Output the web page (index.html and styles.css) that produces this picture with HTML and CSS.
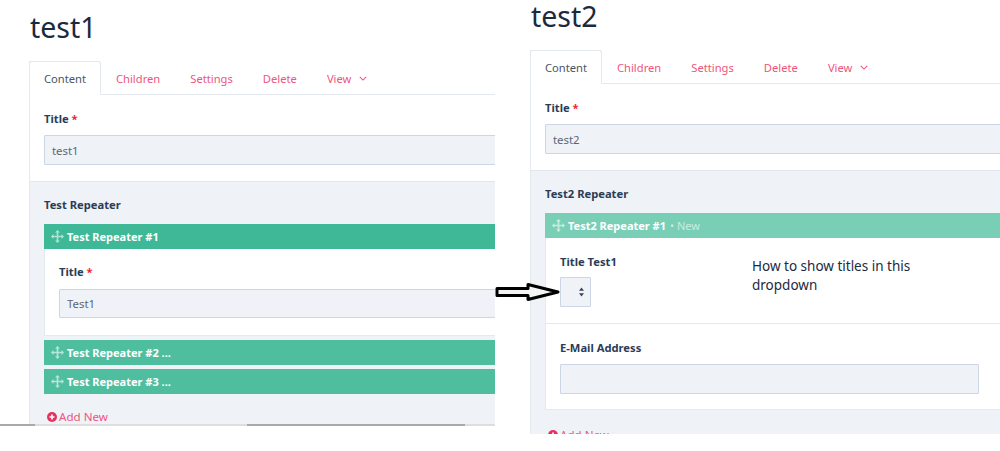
FILE: index.html
```html
<!DOCTYPE html>
<html lang="en">
<head>
<meta charset="utf-8">
<title>Repeater titles</title>
<link rel="stylesheet" href="styles.css">
</head>
<body>
<main class="stage">
  <section class="panel panel-left">
    <h1 class="page-title">test1</h1>
    <div class="card">
      <nav class="tabs">
        <a class="tab tab-active">Content</a>
        <a class="tab">Children</a>
        <a class="tab">Settings</a>
        <a class="tab">Delete</a>
        <a class="tab">View <svg class="caret" viewBox="0 0 10 6"><path d="M1 1l4 4 4-4"/></svg></a>
      </nav>
      <div class="form-top">
        <label class="label">Title <span class="req">*</span></label>
        <input class="input" value="test1" readonly>
      </div>
      <div class="form-gray">
        <div class="label group-label">Test Repeater</div>
        <div class="bar bar-open">
          <svg class="move" viewBox="0 0 16 16"><path d="M8 0l3 3H9v4h4V5l3 3-3 3V9H9v4h2l-3 3-3-3h2V9H3v2L0 8l3-3v2h4V3H5z"/></svg>
          <span>Test Repeater #1</span>
        </div>
        <div class="bar-body body-left">
          <label class="label">Title <span class="req">*</span></label>
          <input class="input" value="Test1" readonly>
        </div>
        <div class="bar bar-closed">
          <svg class="move" viewBox="0 0 16 16"><path d="M8 0l3 3H9v4h4V5l3 3-3 3V9H9v4h2l-3 3-3-3h2V9H3v2L0 8l3-3v2h4V3H5z"/></svg>
          <span>Test Repeater #2 ...</span>
        </div>
        <div class="bar bar-closed">
          <svg class="move" viewBox="0 0 16 16"><path d="M8 0l3 3H9v4h4V5l3 3-3 3V9H9v4h2l-3 3-3-3h2V9H3v2L0 8l3-3v2h4V3H5z"/></svg>
          <span>Test Repeater #3 ...</span>
        </div>
        <a class="add-new">
          <svg class="plus" viewBox="0 0 12 12"><circle cx="6" cy="6" r="6"/><path d="M6 3v6M3 6h6"/></svg>Add New
        </a>
      </div>
    </div>
    <div class="edge">
      <span class="edge-dark edge-a"></span>
      <span class="edge-light edge-b"></span>
      <span class="edge-dark edge-c"></span>
      <span class="edge-light edge-d"></span>
    </div>
  </section>

  <section class="panel panel-right">
    <h1 class="page-title">test2</h1>
    <div class="card">
      <nav class="tabs">
        <a class="tab tab-active">Content</a>
        <a class="tab">Children</a>
        <a class="tab">Settings</a>
        <a class="tab">Delete</a>
        <a class="tab">View <svg class="caret" viewBox="0 0 10 6"><path d="M1 1l4 4 4-4"/></svg></a>
      </nav>
      <div class="form-top">
        <label class="label">Title <span class="req">*</span></label>
        <input class="input" value="test2" readonly>
      </div>
      <div class="form-gray">
        <div class="label group-label">Test2 Repeater</div>
        <div class="bar bar-new">
          <svg class="move" viewBox="0 0 16 16"><path d="M8 0l3 3H9v4h4V5l3 3-3 3V9H9v4h2l-3 3-3-3h2V9H3v2L0 8l3-3v2h4V3H5z"/></svg>
          <span>Test2 Repeater #1</span><span class="new-tag">• New</span>
        </div>
        <div class="bar-body body-right">
          <div class="field-select">
            <label class="label">Title Test1</label>
            <div class="select">
              <svg class="sort" viewBox="0 0 6 11"><path d="M3 0l3 4H0zM3 11L0 7h6z"/></svg>
            </div>
          </div>
          <div class="field-mail">
            <label class="label">E-Mail Address</label>
            <input class="input input-mail" readonly>
          </div>
        </div>
        <a class="add-new">
          <svg class="plus" viewBox="0 0 12 12"><circle cx="6" cy="6" r="6"/><path d="M6 3v6M3 6h6"/></svg>Add New
        </a>
      </div>
    </div>
  </section>

  <svg class="arrow" viewBox="0 0 66 20"><path d="M2 6.500h31V2.500L63 10 33 17.500V13.500H2z"/></svg>
  <p class="note">How to show titles in this dropdown</p>
</main>
</body>
</html>
```
FILE: styles.css
```css
* { box-sizing: border-box; }
html, body { margin: 0; padding: 0; background: #fff; }
body { font-family: "Noto Sans", "Open Sans", sans-serif; color: #22304a; }

.stage {
  position: relative;
  display: flex;
  align-items: flex-start;
  width: 1000px;
  height: 451px;
  overflow: hidden;
}

.panel { position: relative; overflow: hidden; flex: none; }
.panel-left { width: 495px; height: 426px; padding: 0 0 0 29px; }
.panel-right { width: 505px; height: 434px; padding: 0 0 0 35px; }

.page-title {
  margin: 0;
  font-size: 28.500px;
  font-weight: 400;
  color: #1c2a3f;
}
.panel-left .page-title { height: 61px; padding: 7px 0 0 1px; line-height: 40px; }
.panel-right .page-title { height: 50px; padding: 0 0 0 1px; line-height: 33px; }

.card {
  width: 620px;
  border-left: 1px solid #e4e8ef;
  font-size: 11.200px;
}

.tabs {
  display: flex;
  height: 34px;
  border-bottom: 1px solid #e4e8ef;
}
.tab {
  display: flex;
  align-items: center;
  gap: 7px;
  height: 34px;
  padding: 0 15px;
  color: #f0557c;
  white-space: nowrap;
}
.tab-active {
  width: 72px;
  margin-left: -1px;
  padding: 0 14px;
  color: #4b5563;
  background: #fff;
  border: 1px solid #e4e8ef;
  border-bottom-color: #fff;
  border-radius: 3px 3px 0 0;
}
.caret { width: 8px; height: 5px; margin-left: 1px; }
.caret path { fill: none; stroke: #f0557c; stroke-width: 1.300; }

.form-top {
  height: 86px;
  padding: 15px 14px 0;
  background: #fff;
}
.label {
  display: block;
  height: 18px;
  font-size: 11.200px;
  font-weight: 700;
  line-height: 18px;
  color: #2b3c55;
}
.req { color: #f01f2f; }

.input {
  display: block;
  width: 100%;
  height: 30px;
  margin-top: 7px;
  padding: 0 7px;
  font: 11.400px "Noto Sans", sans-serif;
  color: #5b6675;
  background: #eff2f7;
  border: 1px solid #ccd6e4;
  border-radius: 1px;
  outline: none;
}

.form-gray {
  height: 270px;
  padding: 14px 0 0 14px;
  background: #eff2f7;
  border-top: 1px solid #e2e6ee;
}
.group-label { margin-bottom: 10px; }

.bar {
  display: flex;
  align-items: center;
  height: 25px;
  padding-left: 7px;
  font-size: 11px;
  font-weight: 700;
  color: #fff;
}
.bar-open { background: #3eb897; }
.bar-closed { background: #4fbe9f; margin-top: 4px; }
.bar-new { background: #78cfb6; }
.move { width: 13px; height: 13px; margin-right: 3px; flex: none; }
.move path { fill: #fff; opacity: .6; }
.new-tag { margin-left: 4px; font-weight: 400; color: rgba(255, 255, 255, .6); }

.bar-body { background: #fff; border: 1px solid #e4e8ef; border-top: 0; }
.body-left { height: 87px; padding: 14px 14px 0; }
.body-left .input { margin-top: 8px; height: 29px; }
.body-right { height: 172px; width: 600px; }

.field-select {
  height: 86px;
  padding: 15px 14px 0;
  border-bottom: 1px solid #e4e8ef;
}
.select {
  display: flex;
  align-items: center;
  justify-content: flex-end;
  width: 31px;
  height: 30px;
  margin-top: 6px;
  padding-right: 6px;
  background: #eff2f7;
  border: 1px solid #ccd6e4;
  border-radius: 1px;
}
.sort { width: 5px; height: 10px; }
.sort path { fill: #3a4658; }

.field-mail { padding: 15px 14px 0; }
.field-mail .input { margin-top: 7px; }
.input-mail { width: 419px; }

.add-new {
  display: flex;
  align-items: center;
  gap: 2px;
  margin: 15px 0 0 3px;
  font-size: 11.600px;
  line-height: 16px;
  color: #f0557c;
}
.body-right + .add-new { margin-top: 17px; }
.plus { width: 10px; height: 10px; }
.plus circle { fill: #e8315f; }
.plus path { stroke: #fff; stroke-width: 2; fill: none; }

.edge {
  position: absolute;
  left: 0;
  top: 424px;
  display: flex;
  width: 495px;
  height: 2px;
}
.edge-dark { height: 2px; background: #a9a9a9; }
.edge-light { height: 2px; background: #dedede; }
.edge-a { width: 35px; }
.edge-b { width: 212px; }
.edge-c { width: 218px; }
.edge-d { width: 30px; }

.arrow {
  position: absolute;
  left: 495px;
  top: 282px;
  width: 66px;
  height: 20px;
}
.arrow path { fill: #f4f4f4; stroke: #000; stroke-width: 3; stroke-linejoin: round; }

.note {
  position: absolute;
  left: 752px;
  top: 257px;
  width: 180px;
  margin: 0;
  font-size: 13.500px;
  line-height: 19px;
  color: #1c2a3f;
}
```
